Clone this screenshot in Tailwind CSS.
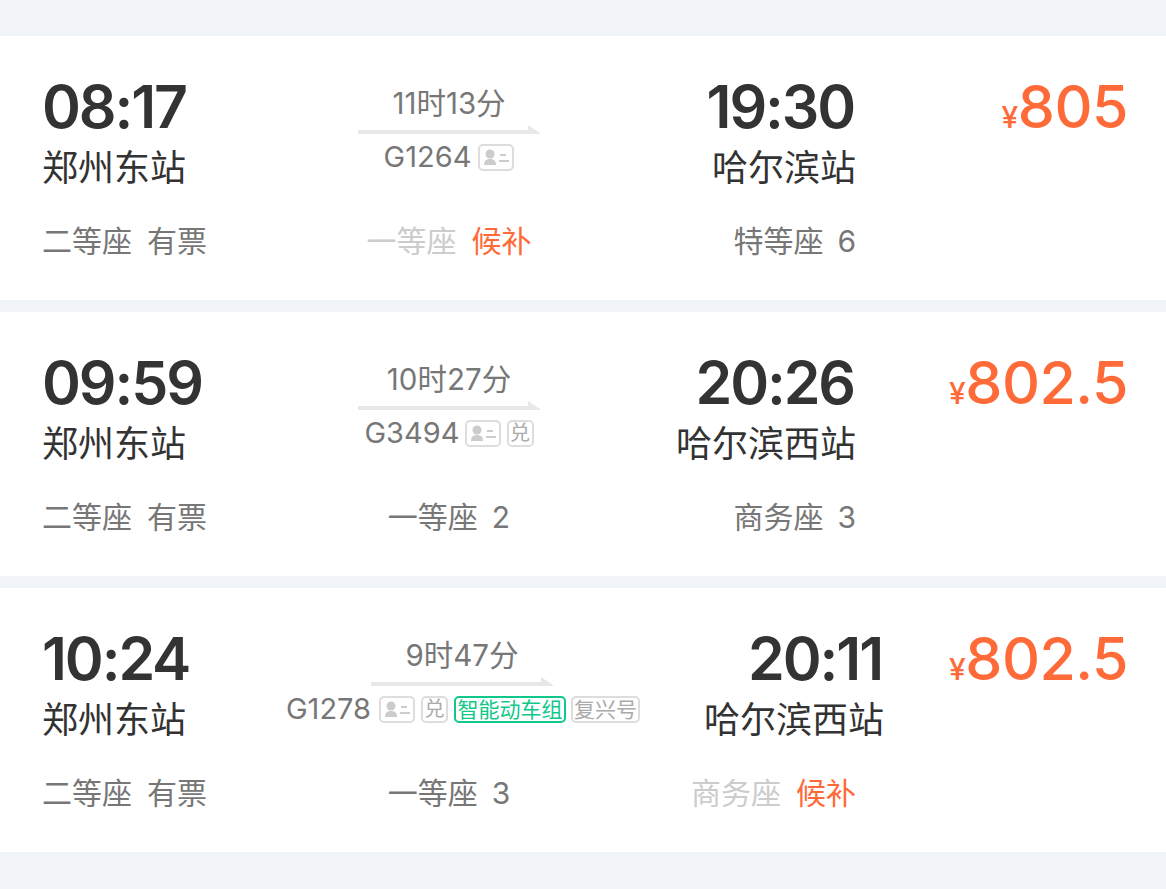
<!DOCTYPE html>
<html lang="zh-CN">
<head>
    <meta charset="UTF-8">
    <title>车次列表</title>
    <script src="https://cdn.jsdelivr.net/npm/@tailwindcss/browser@4"></script>
</head>
<body class="bg-[#f0f3f8] font-['Inter','Noto_Sans_CJK_SC',sans-serif]">
<div class="w-[1166px] h-[889px] pt-[36px] flex flex-col gap-[12px] overflow-hidden">

    <!-- 08:17 -->
    <div class="bg-white h-[264px] pl-[42px] pr-[38px] pt-[41px]">
        <div class="flex h-[120px]">
            <div class="w-[213px] shrink-0">
                <div class="h-[60px] leading-[60px] text-[59px] font-semibold tracking-[-2.1px] text-[#333]">08:17</div>
                <div class="h-[60px] leading-[62px] text-[36px] text-[#333]">郑州东站</div>
            </div>
            <div class="w-[388px] shrink-0 flex flex-col items-center pt-[7px]">
                <div class="h-[38px] leading-[39px] text-[29.5px] text-[#777]">11时13分</div>
                <svg class="mt-[3px]" width="182" height="9" viewBox="0 0 182 9"><polygon points="0,5 170,5 170,0 182,8 182,9 0,9" fill="#e8e8e8"/></svg>
                <div class="mt-[9px] flex items-center gap-[7px] h-[28px] text-[29px] text-[#777]">
                    G1264
                    <svg width="36" height="27" viewBox="0 0 36 27"><rect x="1" y="1" width="34" height="25" rx="4" fill="none" stroke="#ddd" stroke-width="2"/><circle cx="12" cy="10" r="4.5" fill="#ccc"/><path d="M6 21c0-4 2-6 6-6s6 2 6 6z" fill="#ccc"/><path d="M22 11h6M21 17h10" stroke="#ccc" stroke-width="2"/></svg>
                </div>
            </div>
            <div class="w-[213px] shrink-0 text-right">
                <div class="h-[60px] leading-[60px] text-[59px] font-semibold tracking-[-2.1px] text-[#333] pr-[2px]">19:30</div>
                <div class="h-[60px] leading-[62px] text-[36px] text-[#333]">哈尔滨站</div>
            </div>
            <div class="flex-1 text-right h-[60px] leading-[60px] text-[59px] font-medium tracking-[-0.5px] text-[#ff6a39] whitespace-nowrap"><span class="text-[30px]">¥</span>805</div>
        </div>
        <div class="mt-[25px] flex h-[38px] leading-[38px] text-[30px] text-[#777]">
            <div class="w-[213px] flex gap-[15px]"><span>二等座</span><span>有票</span></div>
            <div class="w-[388px] flex gap-[15px] justify-center"><span class="text-[#ccc]">一等座</span><span class="text-[#ff6a39]">候补</span></div>
            <div class="w-[213px] flex gap-[14px] justify-end"><span>特等座</span><span>6</span></div>
        </div>
    </div>

    <!-- 09:59 -->
    <div class="bg-white h-[264px] pl-[42px] pr-[38px] pt-[41px]">
        <div class="flex h-[120px]">
            <div class="w-[213px] shrink-0">
                <div class="h-[60px] leading-[60px] text-[59px] font-semibold tracking-[-2.1px] text-[#333]">09:59</div>
                <div class="h-[60px] leading-[62px] text-[36px] text-[#333]">郑州东站</div>
            </div>
            <div class="w-[388px] shrink-0 flex flex-col items-center pt-[7px]">
                <div class="h-[38px] leading-[39px] text-[29.5px] text-[#777]">10时27分</div>
                <svg class="mt-[3px]" width="182" height="9" viewBox="0 0 182 9"><polygon points="0,5 170,5 170,0 182,8 182,9 0,9" fill="#e8e8e8"/></svg>
                <div class="mt-[9px] flex items-center gap-[6px] h-[28px] text-[29px] text-[#777]">
                    <span class="-mr-[1px]">G3494</span>
                    <svg width="36" height="27" viewBox="0 0 36 27"><rect x="1" y="1" width="34" height="25" rx="4" fill="none" stroke="#ddd" stroke-width="2"/><circle cx="12" cy="10" r="4.5" fill="#ccc"/><path d="M6 21c0-4 2-6 6-6s6 2 6 6z" fill="#ccc"/><path d="M22 11h6M21 17h10" stroke="#ccc" stroke-width="2"/></svg>
                    <span class="w-[27px] h-[27px] border-2 border-[#ddd] rounded-[5px] flex items-center justify-center text-[20px] leading-none text-[#aaa]">兑</span>
                </div>
            </div>
            <div class="w-[213px] shrink-0 text-right">
                <div class="h-[60px] leading-[60px] text-[59px] font-semibold tracking-[-2.1px] text-[#333] pr-[2px]">20:26</div>
                <div class="h-[60px] leading-[62px] text-[36px] text-[#333]">哈尔滨西站</div>
            </div>
            <div class="flex-1 text-right h-[60px] leading-[60px] text-[59px] font-medium tracking-[-0.5px] text-[#ff6a39] whitespace-nowrap"><span class="text-[30px]">¥</span>802.5</div>
        </div>
        <div class="mt-[25px] flex h-[38px] leading-[38px] text-[30px] text-[#777]">
            <div class="w-[213px] flex gap-[15px]"><span>二等座</span><span>有票</span></div>
            <div class="w-[388px] flex gap-[14px] justify-center"><span>一等座</span><span>2</span></div>
            <div class="w-[213px] flex gap-[14px] justify-end"><span>商务座</span><span>3</span></div>
        </div>
    </div>

    <!-- 10:24 -->
    <div class="bg-white h-[264px] pl-[42px] pr-[38px] pt-[41px]">
        <div class="flex h-[120px]">
            <div class="w-[225px] shrink-0">
                <div class="h-[60px] leading-[60px] text-[59px] font-semibold tracking-[-2.1px] text-[#333]">10:24</div>
                <div class="h-[60px] leading-[62px] text-[36px] text-[#333]">郑州东站</div>
            </div>
            <div class="w-[390px] shrink-0 flex flex-col items-center pt-[7px]">
                <div class="h-[38px] leading-[39px] text-[29.5px] text-[#777]">9时47分</div>
                <svg class="mt-[3px]" width="182" height="9" viewBox="0 0 182 9"><polygon points="0,5 170,5 170,0 182,8 182,9 0,9" fill="#e8e8e8"/></svg>
                <div class="mt-[9px] ml-[2px] flex items-center gap-[6px] h-[28px] text-[29px] text-[#777] whitespace-nowrap">
                    <span class="mr-[2px]">G1278</span>
                    <svg width="36" height="27" viewBox="0 0 36 27"><rect x="1" y="1" width="34" height="25" rx="4" fill="none" stroke="#ddd" stroke-width="2"/><circle cx="12" cy="10" r="4.5" fill="#ccc"/><path d="M6 21c0-4 2-6 6-6s6 2 6 6z" fill="#ccc"/><path d="M22 11h6M21 17h10" stroke="#ccc" stroke-width="2"/></svg>
                    <span class="w-[27px] h-[27px] border-2 border-[#ddd] rounded-[5px] flex items-center justify-center text-[20px] leading-none text-[#aaa]">兑</span>
                    <span class="h-[27px] px-[1.5px] border-2 border-[#10c88a] rounded-[5px] flex items-center text-[21px] leading-none text-[#10c88a]">智能动车组</span>
                    <span class="-ml-[1px] h-[27px] px-[1px] border-2 border-[#ddd] rounded-[5px] flex items-center text-[21px] leading-none text-[#aaa]">复兴号</span>
                </div>
            </div>
            <div class="w-[227px] shrink-0 text-right">
                <div class="h-[60px] leading-[60px] text-[59px] font-semibold tracking-[-2.1px] text-[#333] pr-[2px]">20:11</div>
                <div class="h-[60px] leading-[62px] text-[36px] text-[#333]">哈尔滨西站</div>
            </div>
            <div class="flex-1 text-right h-[60px] leading-[60px] text-[59px] font-medium tracking-[-0.5px] text-[#ff6a39] whitespace-nowrap"><span class="text-[30px]">¥</span>802.5</div>
        </div>
        <div class="mt-[25px] flex h-[38px] leading-[38px] text-[30px] text-[#777]">
            <div class="w-[213px] flex gap-[15px]"><span>二等座</span><span>有票</span></div>
            <div class="w-[388px] flex gap-[14px] justify-center"><span>一等座</span><span>3</span></div>
            <div class="w-[213px] flex gap-[15px] justify-end"><span class="text-[#ccc]">商务座</span><span class="text-[#ff6a39]">候补</span></div>
        </div>
    </div>

</div>
</body>
</html>
